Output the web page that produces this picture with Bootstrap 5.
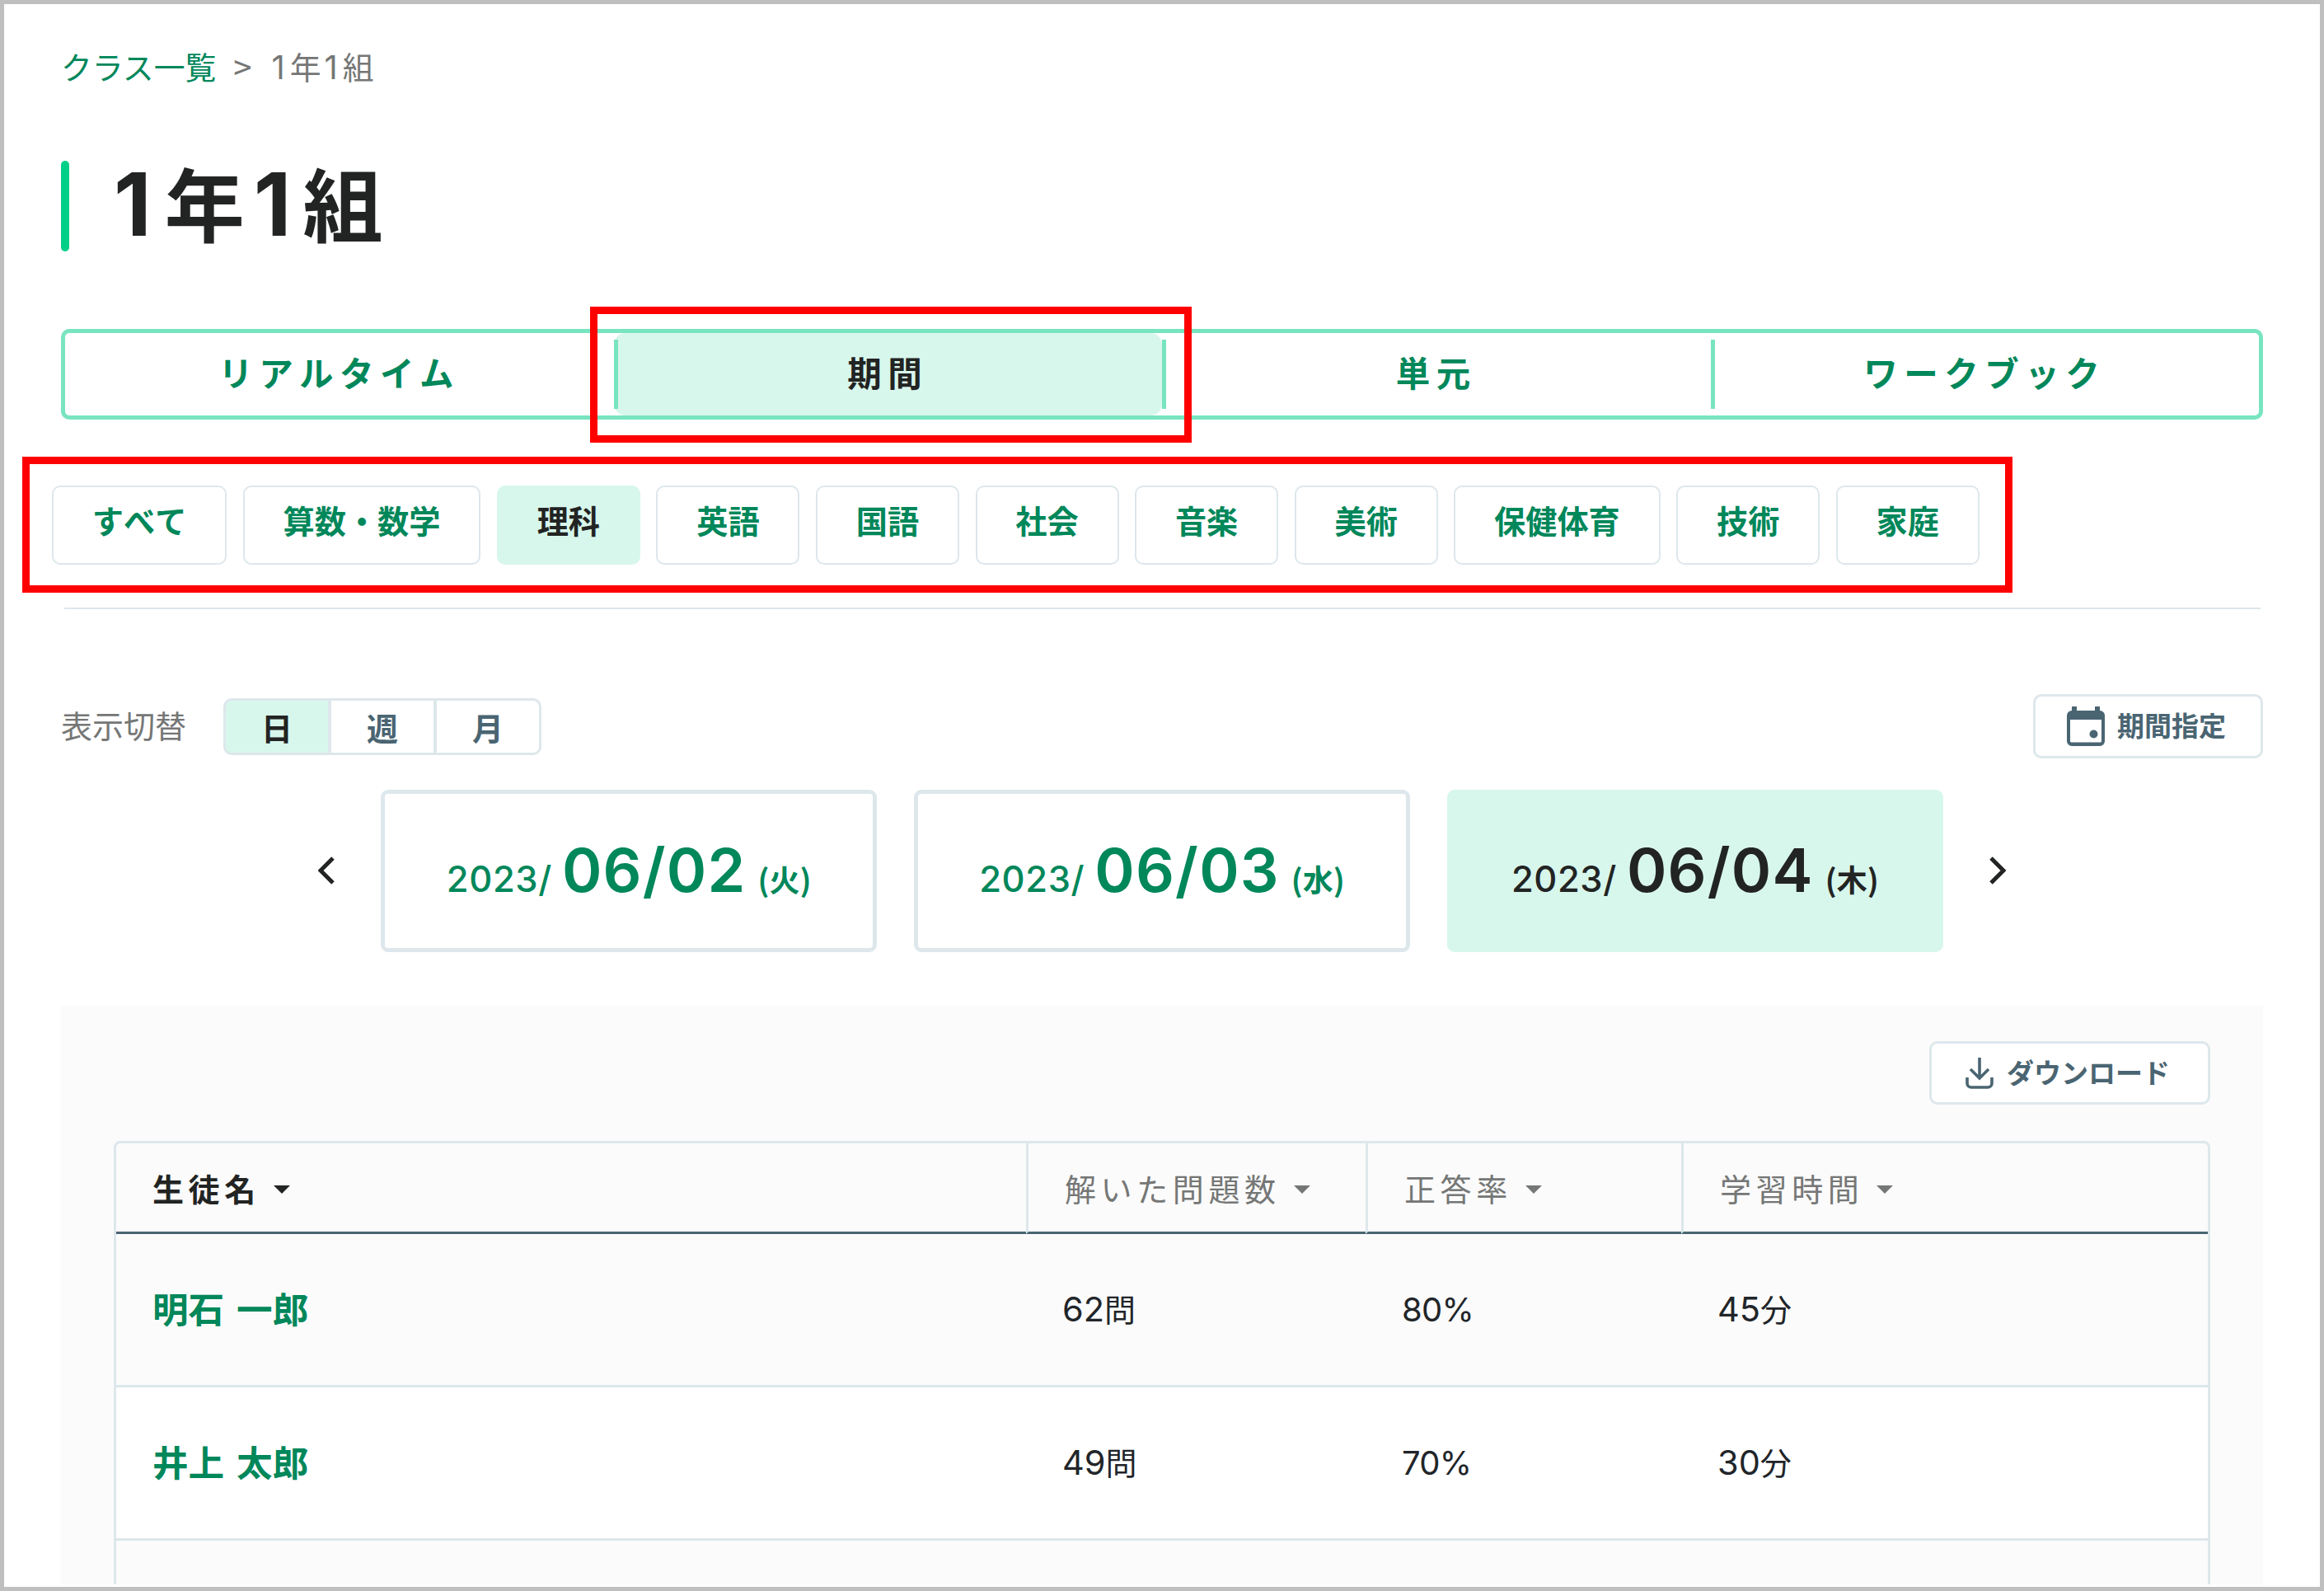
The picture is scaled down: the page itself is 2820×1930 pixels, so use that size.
<!DOCTYPE html>
<html lang="ja">
<head>
    <meta charset="UTF-8">
    <meta name="viewport" content="width=device-width, initial-scale=1.0">
    <title>1年1組</title>

    <link href="https://cdn.jsdelivr.net/npm/bootstrap@5.3.0/dist/css/bootstrap.min.css" rel="stylesheet">

    <style>
        :root {
            --green: #00875a;
            --mint: #d8f7ec;
            --mint-line: #78e4c0;
            --line: #dde7ec;
            --slate: #4a6572;
            --ink: #222423;
            --gray: #757776;
        }
        body {
            font-family: "Noto Sans CJK JP", "Noto Sans", sans-serif;
            font-size: 38px;
            line-height: 50px;
            color: var(--ink);
            background: #fff;
        }
        .page-frame {
            width: 2820px;
            height: 1930px;
            border: 5px solid #bfbfbf;
            padding: 50px 69px 0;
            overflow: hidden;
        }
        .num {
            font-family: "Inter", "Noto Sans CJK JP", sans-serif;
            line-height: 1;
        }

        /* Breadcrumb and heading */
        .crumbs {
            height: 50px;
            font-size: 37.8px;
            color: var(--gray);
        }
        .crumbs a { color: var(--green); }
        .crumbs .sep { margin: 0 24px 0 21px; font-size: 40px; }
        .crumbs .num { font-size: 40px; margin-right: 6px; }
        .crumbs .num + .num { margin-left: 4px; }
        .page-title {
            height: 110px;
            margin-top: 90px;
        }
        .page-title::before {
            content: "";
            width: 10px;
            height: 110px;
            margin-right: 54px;
            border-radius: 5px;
            background: #00cf87;
        }
        .page-title h1 {
            font-size: 97px;
            line-height: 98px;
            font-weight: 700;
        }
        .page-title .num { font-size: 106px; margin-right: 16px; }
        .page-title .num + .num { margin-left: 11px; margin-right: 14px; }

        /* Main tabs */
        .main-tabs {
            height: 110px;
            margin-top: 94px;
            border: 5px solid var(--mint-line);
            border-radius: 10px;
        }
        .main-tabs .nav-link {
            position: relative;
            height: 100px;
            padding: 0;
            line-height: 95px;
            font-size: 41.5px;
            font-weight: 700;
            letter-spacing: 7.5px;
            color: var(--green);
            border-radius: 14px;
        }
        .main-tabs .nav-link.active {
            background: var(--mint);
            color: var(--ink);
        }
        .main-tabs .nav-item + .nav-item .nav-link::before {
            content: "";
            position: absolute;
            left: 0;
            top: 8px;
            width: 5px;
            height: 84px;
            background: var(--mint-line);
        }
        .callout-box {
            position: absolute;
            border: 9px solid #f00;
            pointer-events: none;
            z-index: 2;
        }
        .callout-tab { left: -29px; top: -32px; width: 730px; height: 165px; }
        .callout-subjects { left: -36px; top: -35px; width: 2415px; height: 165px; }

        /* Subject chips */
        .subjects {
            gap: 19.6px;
            margin: 80px 0 0 -11px;
        }
        .subjects .btn {
            height: 96px;
            padding: 0 46.8px 12px;
            border: 2px solid var(--line);
            border-radius: 10px;
            font-size: 38.2px;
            font-weight: 700;
            font-kerning: none;
            color: var(--green);
            white-space: nowrap;
        }
        .subjects .btn.active {
            background: var(--mint);
            border-color: var(--mint);
            color: var(--ink);
        }
        .divider {
            height: 2px;
            margin: 52px 3px 0 4px;
            background: var(--line);
        }

        /* Toolbar */
        .toolbar { height: 78px; margin-top: 103px; }
        .toolbar .caption { color: var(--gray); margin-right: 45px; padding-bottom: 4px; }
        .unit-switch .btn {
            flex: none;
            width: 129px;
            height: 69px;
            padding: 0;
            line-height: 57px;
            border: 3px solid var(--line);
            border-radius: 10px;
            font-size: 38px;
            font-weight: 700;
            color: var(--slate);
        }
        .unit-switch .btn + .btn { border-left-width: 2px; }
        .unit-switch .btn.active {
            width: 130px;
            background: var(--mint);
            border-color: var(--line);
            color: var(--ink);
        }
        .tool-btn {
            height: 78px;
            padding: 0;
            border: 3px solid var(--line);
            border-radius: 10px;
            background: #fff;
            font-size: 33px;
            font-weight: 700;
            color: var(--slate);
        }
        .tool-btn span { padding-bottom: 2px; }
        .period-btn { width: 279px; padding-left: 38px; gap: 15px; }
        .download-btn { width: 341px; height: 77px; padding-left: 41px; gap: 16px; }

        /* Date picker row */
        .date-row { height: 197px; margin-top: 38px; gap: 44.3px; }
        .date-row .arrow { width: 32px; height: 44px; }
        .date-card {
            width: 602.5px;
            height: 197px;
            padding-bottom: 2px;
            border: 5px solid var(--line);
            border-radius: 9px;
            color: var(--green);
            font-weight: 500;
            white-space: nowrap;
        }
        .date-card.active {
            background: var(--mint);
            border-color: var(--mint);
            color: var(--ink);
        }
        .date-card .year { font-size: 43.5px; letter-spacing: .6px; margin-right: 12px; }
        .date-card .day { font-size: 73.5px; font-weight: 600; letter-spacing: 1.2px; margin-right: 14px; }
        .date-card .weekday { font-size: 37px; font-weight: 700; }

        /* Result panel */
        .panel {
            height: 702px;
            margin-top: 65px;
            padding: 43px 64px 0;
            background: #fbfbfb;
            overflow: hidden;
        }
        .result-box {
            height: 600px;
            margin-top: 44px;
            border: 3px solid var(--line);
            border-radius: 8px;
            overflow: hidden;
        }
        .result {
            table-layout: fixed;
            border-collapse: separate;
            border-spacing: 0;
        }
        .result > :not(caption) > * > * {
            padding: 0 0 4px 44px;
            border: 0 solid var(--line);
            vertical-align: middle;
            background: transparent;
            box-shadow: none;
        }
        .result thead th {
            height: 110px;
            padding-top: 5px;
            font-weight: 400;
            letter-spacing: 5.6px;
            color: var(--gray);
            border-bottom: 3px solid var(--slate);
        }
        .result thead th + th { border-left: 3px solid var(--line); }
        .result thead th.sorted { font-weight: 700; color: var(--ink); }
        .result tbody td { height: 186px; border-bottom-width: 3px; }
        .result tbody tr:nth-child(even) td { background: #fff; }
        .result tbody .student {
            padding-bottom: 6px;
            font-size: 43.6px;
            font-weight: 700;
            word-spacing: 5px;
            color: var(--green);
        }
        .result .num { font-size: 41.5px; }
        .result .percent { font-size: 40px; letter-spacing: -.7px; }
        .caret {
            display: inline-block;
            margin-left: 16px;
            border: solid transparent;
            border-width: 10px 10px 0;
            border-top-color: currentColor;
            vertical-align: 9px;
        }
    </style>
</head>
<body>

<div class="page-frame">

    <nav class="crumbs d-flex">
        <a href="#" class="text-decoration-none">クラス一覧</a>
        <span class="sep">&gt;</span>
        <span><span class="num">1</span>年<span class="num">1</span>組</span>
    </nav>

    <div class="page-title d-flex">
        <h1 class="mb-0"><span class="num">1</span>年<span class="num">1</span>組</h1>
    </div>

    <ul class="main-tabs nav nav-fill nav-justified flex-nowrap">
        <li class="nav-item"><a class="nav-link" href="#">リアルタイム</a></li>
        <li class="nav-item"><a class="nav-link active" href="#">期間<span class="callout-box callout-tab"></span></a></li>
        <li class="nav-item"><a class="nav-link" href="#">単元</a></li>
        <li class="nav-item"><a class="nav-link" href="#">ワークブック</a></li>
    </ul>

    <div class="subjects d-flex position-relative">
        <button class="btn">すべて</button>
        <button class="btn">算数・数学</button>
        <button class="btn active">理科</button>
        <button class="btn">英語</button>
        <button class="btn">国語</button>
        <button class="btn">社会</button>
        <button class="btn">音楽</button>
        <button class="btn">美術</button>
        <button class="btn">保健体育</button>
        <button class="btn">技術</button>
        <button class="btn">家庭</button>
        <span class="callout-box callout-subjects"></span>
    </div>

    <div class="divider"></div>

    <div class="toolbar d-flex align-items-center">
        <span class="caption">表示切替</span>
        <div class="unit-switch btn-group">
            <button class="btn active">日</button>
            <button class="btn">週</button>
            <button class="btn">月</button>
        </div>
        <button class="tool-btn period-btn btn d-flex align-items-center ms-auto">
            <svg width="46" height="48" viewBox="0 0 46 48" fill="currentColor">
                <path fill-rule="evenodd" d="M6 5V0h6v5h22V0h6v5a6 6 0 0 1 6 6v31a6 6 0 0 1-6 6H6a6 6 0 0 1-6-6V11a6 6 0 0 1 6-6zM4 16v26a1.500 1.500 0 0 0 1.500 1.500h35A1.500 1.500 0 0 0 42 42V16z"/>
                <circle cx="32.500" cy="33.500" r="5"/>
            </svg>
            <span>期間指定</span>
        </button>
    </div>

    <div class="date-row d-flex align-items-center justify-content-center">
        <svg class="arrow" viewBox="0 0 32 44" fill="none" stroke="#222423" stroke-width="5"><path d="M18 6L3 21l15 15"/></svg>
        <div class="date-card d-flex align-items-center justify-content-center"><span><span class="num year">2023/</span><span class="num day">06/02</span><span class="weekday">(火)</span></span></div>
        <div class="date-card d-flex align-items-center justify-content-center"><span><span class="num year">2023/</span><span class="num day">06/03</span><span class="weekday">(水)</span></span></div>
        <div class="date-card active d-flex align-items-center justify-content-center"><span><span class="num year">2023/</span><span class="num day">06/04</span><span class="weekday">(木)</span></span></div>
        <svg class="arrow" viewBox="0 0 32 44" fill="none" stroke="#222423" stroke-width="5"><path d="M14 6l15 15-15 15"/></svg>
    </div>

    <div class="panel">
        <button class="tool-btn download-btn btn d-flex align-items-center ms-auto">
            <svg width="34" height="38" viewBox="0 0 34 38" fill="none" stroke="currentColor" stroke-width="3.600">
                <path d="M17 0v25M6 14l11 11 11-11M2 24v7a5 5 0 0 0 5 5h20a5 5 0 0 0 5-5v-7"/>
            </svg>
            <span>ダウンロード</span>
        </button>

        <div class="result-box">
            <table class="result table mb-0">
                <colgroup>
                    <col style="width: 1104px">
                    <col style="width: 412px">
                    <col style="width: 383px">
                    <col>
                </colgroup>
                <thead>
                    <tr>
                        <th class="sorted">生徒名<i class="caret"></i></th>
                        <th>解いた問題数<i class="caret"></i></th>
                        <th>正答率<i class="caret"></i></th>
                        <th>学習時間<i class="caret"></i></th>
                    </tr>
                </thead>
                <tbody>
                    <tr>
                        <td class="student">明石 一郎</td>
                        <td><span class="num">62</span>問</td>
                        <td><span class="num percent">80%</span></td>
                        <td><span class="num">45</span>分</td>
                    </tr>
                    <tr>
                        <td class="student">井上 太郎</td>
                        <td><span class="num">49</span>問</td>
                        <td><span class="num percent">70%</span></td>
                        <td><span class="num">30</span>分</td>
                    </tr>
                    <tr>
                        <td></td>
                        <td></td>
                        <td></td>
                        <td></td>
                    </tr>
                </tbody>
            </table>
        </div>
    </div>
</div>

<script src="https://cdn.jsdelivr.net/npm/bootstrap@5.3.0/dist/js/bootstrap.bundle.min.js"></script>
</body>
</html>
